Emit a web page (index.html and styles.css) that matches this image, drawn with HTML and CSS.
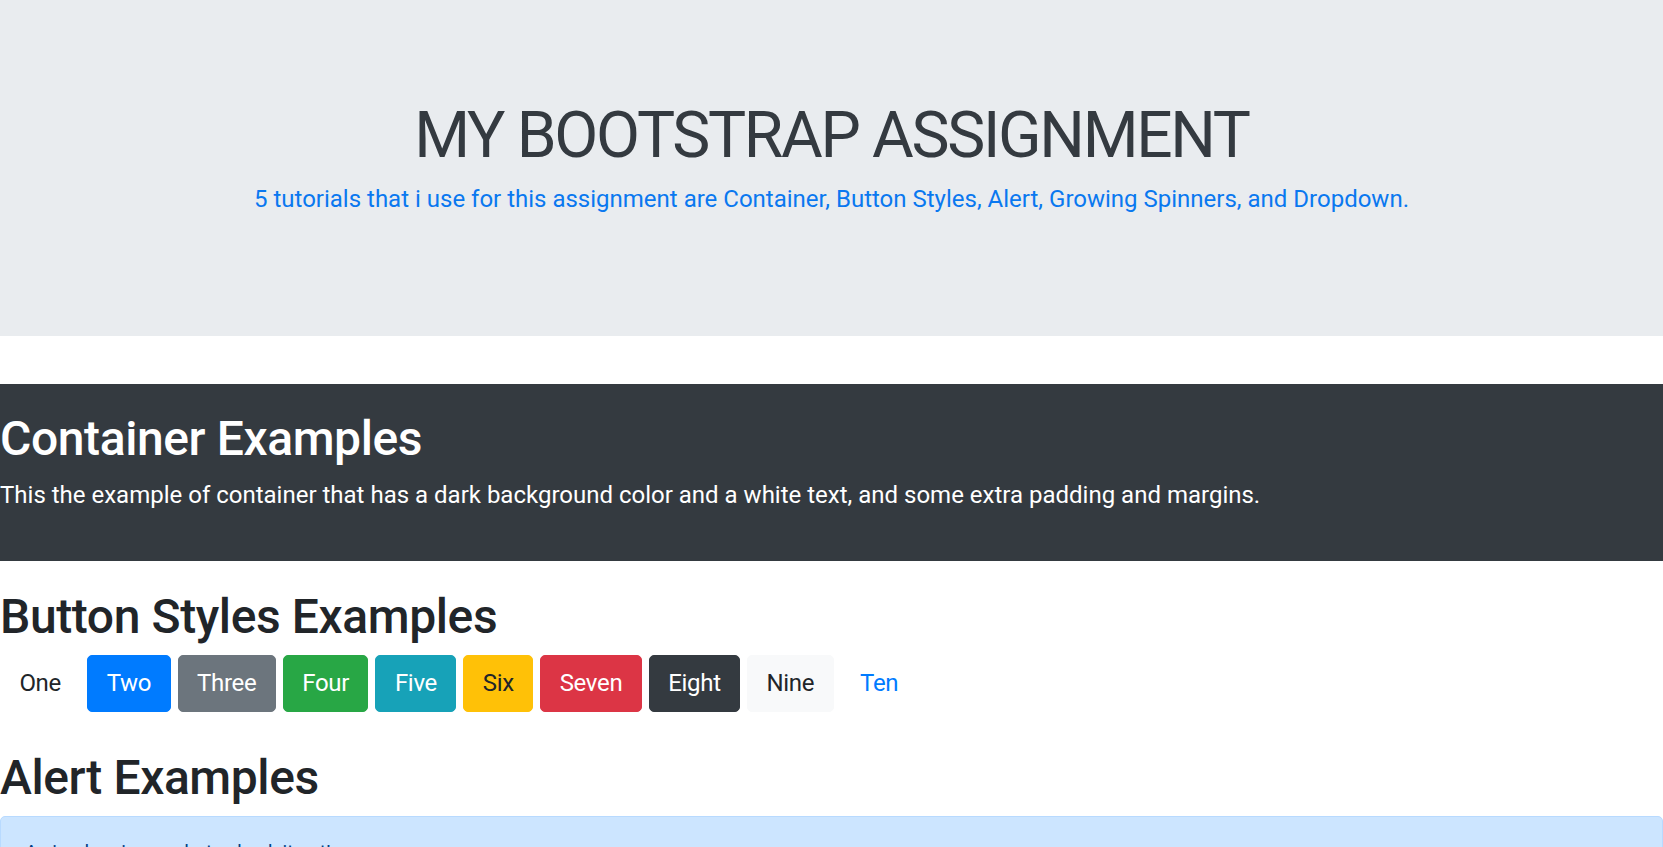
FILE: index.html
```html
<!DOCTYPE html>
<html lang="en">
<head>
<meta charset="utf-8">
<title>My Bootstrap Assignment</title>
<link rel="stylesheet" href="styles.css">
</head>
<body>
<header class="jumbotron">
  <h1 class="display-title">MY BOOTSTRAP ASSIGNMENT</h1>
  <p class="lead lead-primary">5 tutorials that i use for this assignment are Container, Button Styles, Alert, Growing Spinners, and Dropdown.</p>
</header>

<section class="dark-box">
  <h1 class="section-title">Container Examples</h1>
  <p class="lead">This the example of container that has a dark background color and a white text, and some extra padding and margins.</p>
</section>

<section class="buttons-section">
  <h1 class="section-title">Button Styles Examples</h1>
  <div class="btn-row">
    <button class="btn">One</button>
    <button class="btn btn-primary">Two</button>
    <button class="btn btn-secondary">Three</button>
    <button class="btn btn-success">Four</button>
    <button class="btn btn-info">Five</button>
    <button class="btn btn-warning">Six</button>
    <button class="btn btn-danger">Seven</button>
    <button class="btn btn-dark">Eight</button>
    <button class="btn btn-light">Nine</button>
    <button class="btn btn-link">Ten</button>
  </div>
</section>

<section class="alert-section">
  <h1 class="section-title">Alert Examples</h1>
  <div class="alert alert-primary">A simple primary alert&mdash;check it out!</div>
  <div class="alert alert-secondary">A simple secondary alert&mdash;check it out!</div>
</section>
</body>
</html>
```

FILE: styles.css
```css
* { box-sizing: border-box; }
html, body { margin: 0; padding: 0; }
body {
  font-family: Roboto, "Liberation Sans", sans-serif;
  font-size: 19.2px;
  line-height: 1.5;
  color: #212529;
  background: #fff;
}
h1, p { margin: 0; }

.jumbotron {
  background: #e9ecef;
  height: 336px;
  padding-top: 98px;
  text-align: center;
}
.display-title {
  font-size: 64px;
  font-weight: 400;
  line-height: 1.2;
  letter-spacing: -2.3px;
  color: #343a40;
}
.lead { font-size: 24px; line-height: 1.5; }
.lead-primary { color: #0a78f0; margin-top: 6px; }

.dark-box {
  margin-top: 48px;
  background: #343a40;
  color: #fff;
  height: 177px;
  padding-top: 26px;
}
.section-title {
  font-size: 48px;
  font-weight: 500;
  line-height: 1.2;
  letter-spacing: -0.4px;
}
.dark-box .lead { margin-top: 9px; }

.buttons-section { padding-top: 27px; }
.btn-row {
  display: flex;
  gap: 7px;
  margin-top: 9px;
}
.btn {
  font-family: inherit;
  font-size: 24px;
  line-height: 1.5;
  letter-spacing: -0.3px;
  padding: 9.8px 18.4px;
  border: 1px solid transparent;
  border-radius: 5px;
  background: transparent;
  color: #212529;
  cursor: pointer;
}
.btn-primary { background: #007bff; border-color: #007bff; color: #fff; }
.btn-secondary { background: #6c757d; border-color: #6c757d; color: #fff; }
.btn-success { background: #28a745; border-color: #28a745; color: #fff; }
.btn-info { background: #17a2b8; border-color: #17a2b8; color: #fff; }
.btn-warning { background: #ffc107; border-color: #ffc107; color: #212529; }
.btn-danger { background: #dc3545; border-color: #dc3545; color: #fff; }
.btn-dark { background: #343a40; border-color: #343a40; color: #fff; }
.btn-light { background: #f8f9fa; border-color: #f8f9fa; color: #212529; }
.btn-link { color: #007bff; }

.alert-section { padding-top: 37px; }
.alert-section .section-title { margin-bottom: 9.6px; }
.alert {
  padding: 21px 24px 14px;
  border: 1px solid transparent;
  border-radius: 5px;
  margin-bottom: 19px;
}
.alert-primary { background: #cce5ff; border-color: #b8daff; color: #004085; }
.alert-secondary { background: #e2e3e5; border-color: #d6d8db; color: #383d41; }
```
